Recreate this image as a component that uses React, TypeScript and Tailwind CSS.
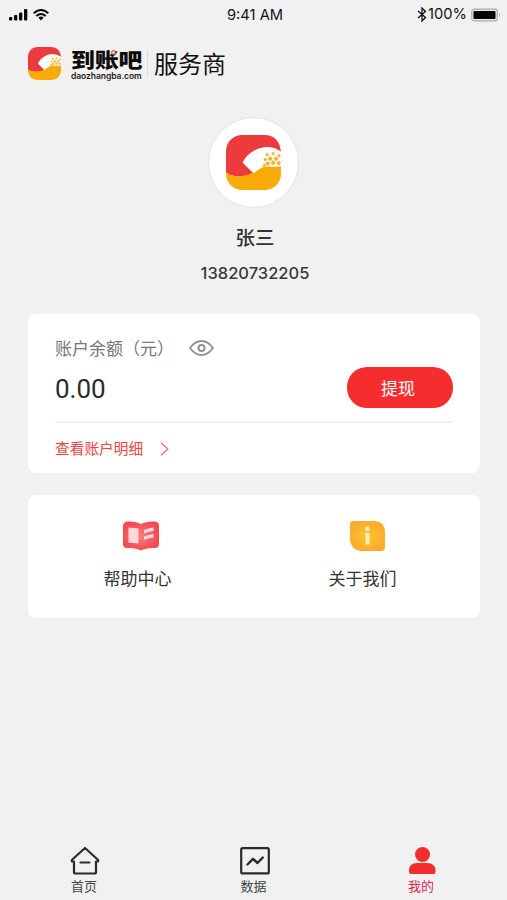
import React from "react";

const CJK = "font-['Noto_Sans_CJK_SC',sans-serif]";
const LATIN = "font-['Inter','Noto_Sans_CJK_SC',sans-serif]";

function Logo({ className }: { className: string }) {
  return (
    <svg viewBox="0 0 56 56" className={className}>
      <path d="M17 0H39C49 0 55 6 56 17Q50 12.500 42 12.500C30 12.500 21 20 17 28L28 39Q20 43 12 42Q5 42 0 38V17C0 7 7 0 17 0Z" fill="#ed3a3c" />
      <path d="M0 38Q5 42 12 42Q21 42 28 38C34 33 40 31 47 32H56V39C56 49 49 56 39 56H17C7 56 0 49 0 39Z" fill="#fbab07" />
      <path d="M17 28C21 20 30 12.500 42 12.500Q50 12.500 56 17V30L51 32H39Q34 34 28 39Z" fill="#fff" />
      <g fill="#fbb32e">
        <path d="M48 17l2 2-2 2-2-2zM42 18l2 2-2 2-2-2zM54 19l2 2-2 2-2-2zM45 21.500l2.600 2.600L45 26.700l-2.600-2.600zM51 21.500l2.600 2.600L51 26.700l-2.600-2.600zM40 23l2 2-2 2-2-2zM48 25.500l2.800 2.800L48 31.100l-2.800-2.800zM54 26l2 2.600-2 2.600-2.600-2.600zM42.500 26.500l2.600 2.600-2.600 2.600-2.600-2.600zM39 29l2 2-2 2-2-2z" />
      </g>
    </svg>
  );
}

function StatusBar() {
  return (
    <div className={`${LATIN} flex h-[30px] items-center text-[14.700px] leading-none text-[#111]`}>
      <div className="flex w-[227px] items-center gap-[5px] pl-[9px]">
        <svg className="h-[12px] w-[19px]" viewBox="0 0 19 12" fill="#080808">
          <rect x="0" y="8" width="3.300" height="3.500" rx="1" />
          <rect x="5" y="6" width="3.300" height="5.500" rx="1" />
          <rect x="10" y="3.500" width="3.300" height="8" rx="1" />
          <rect x="15" y="0" width="3.300" height="11.500" rx="1" />
        </svg>
        <svg className="h-[12px] w-[16px]" viewBox="0 0 16 12" fill="none" stroke="#080808" strokeWidth="2">
          <path d="M.7 4.200Q8-2.200 15.300 4.200M3.300 7Q8 3 12.700 7" />
          <path d="M5.300 8.600Q8 6.500 10.700 8.600L8 11.500Z" fill="#080808" stroke="none" />
        </svg>
      </div>
      <span>9:41 AM</span>
      <div className="ml-auto flex items-center pr-[5px]">
        <svg className="-mt-[1px] h-[15px] w-[10px]" viewBox="0 0 10 15" fill="none" stroke="#111" strokeWidth="1.300">
          <path d="M1 4L8.500 10.500L5 14V1L8.500 4.500L1 11" />
        </svg>
        <span className="ml-[1px] -mt-[1px]">100%</span>
        <svg className="ml-[4px] h-[14px] w-[31px]" viewBox="0 0 31 14">
          <rect x=".8" y="1.200" width="25.500" height="11.600" rx="2.500" fill="#ededed" stroke="#aaa" strokeWidth="1.200" />
          <rect x="2.500" y="3" width="22" height="8" rx="1" fill="#050505" />
          <path d="M28 5Q30 7 28 9Z" fill="#aaa" />
        </svg>
      </div>
    </div>
  );
}

function Header() {
  return (
    <header className="mt-[16px] flex h-[34px] items-center pl-[28px]">
      <Logo className="h-[33px] w-[33px]" />
      <div className="ml-[10px] w-[71px] pt-[4px]">
        <div className="relative h-[22px]">
          <span className={`${CJK} block origin-top scale-y-[0.86] whitespace-nowrap text-[24px] font-black leading-[24px] tracking-[-0.2px] text-[#0b0b0b]`}>到账吧</span>
          <span className="absolute left-[40px] top-[1px] h-[5px] w-[5px] rounded-full border-[1.500px] border-[#ed3a3c] bg-[#f8c8c8]" />
        </div>
        <div className="whitespace-nowrap font-['Inter',sans-serif] text-[8.500px] font-semibold leading-[10px] tracking-[-0.05px] text-[#222]">daozhangba.com</div>
      </div>
      <div className="ml-[5px] h-[27px] w-px bg-[#dcdcdc]" />
      <span className={`${CJK} ml-[6px] text-[24px] leading-[34px] text-[#111]`}>服务商</span>
    </header>
  );
}

function Profile() {
  return (
    <section className="mt-[36.500px] flex flex-col items-center">
      <div className="flex h-[91px] w-[91px] items-center justify-center rounded-full border border-[#e3e3e3] bg-white">
        <Logo className="h-[55px] w-[55px]" />
      </div>
      <div className={`${CJK} ml-[3px] mt-[15px] h-[28px] text-[19.500px] font-medium leading-[28px] text-[#333]`}>张三</div>
      <div className={`${LATIN} ml-[3px] mt-[12px] h-[20px] text-[16.500px] font-medium leading-[20px] text-[#383838]`}>13820732205</div>
    </section>
  );
}

function Balance() {
  return (
    <section className={`${CJK} ml-[28px] mr-[27px] mt-[31px] h-[159px] rounded-[8px] bg-white pl-[27px] pr-[28px] pt-[22.500px]`}>
      <div className="flex h-[24px] items-center text-[17px] text-[#777]">
        <span className="w-[134px] whitespace-nowrap">账户余额（元）</span>
        <svg className="h-[16px] w-[25px]" viewBox="0 0 25 16" fill="none" stroke="#929292" strokeWidth="1.800">
          <path d="M1 8Q6 1 12.500 1T24 8Q19 15 12.500 15T1 8Z" />
          <circle cx="12.500" cy="8" r="3" strokeWidth="2" />
        </svg>
      </div>
      <div className="mt-[7px] flex h-[41px] items-center justify-between">
        <span className="pt-[4px] font-['Roboto',sans-serif] text-[26px] text-[#2c2c2c]">0.00</span>
        <button className="-mr-[1px] flex h-[41px] w-[106px] items-center justify-center rounded-[20px] bg-[#f52d2e] pr-[4px] text-[17px] text-white">提现</button>
      </div>
      <div className="mt-[12.500px] h-[2px] bg-[#f0f0f0]" />
      <div className="mt-[15px] flex h-[22px] items-center text-[14.700px] leading-none text-[#ee4444]">
        <span>查看账户明细</span>
        <svg className="ml-[17px] h-[14px] w-[9px]" viewBox="0 0 9 14" fill="none" stroke="#f06c72" strokeWidth="1.200">
          <path d="M1 .7L7.800 7L1 13.300" />
        </svg>
      </div>
    </section>
  );
}

function Shortcuts() {
  return (
    <section className={`${CJK} ml-[28px] mr-[27px] mt-[22.500px] flex h-[123px] rounded-[8px] bg-white pt-[26px] text-[17px] text-[#333]`}>
      <div className="flex w-[219px] flex-col items-center">
        <svg className="ml-[7px] h-[30px] w-[36px]" viewBox="0 0 36 30">
          <defs>
            <radialGradient id="book"><stop stopColor="#f77c80" /><stop offset="1" stopColor="#f44b51" /></radialGradient>
          </defs>
          <path d="M4 .5Q13 0 18 3Q23 0 32 .5Q36 1 36 5V23Q36 27 32 27Q23 26.500 18 29.500Q13 26.500 4 27Q0 27 0 23V5Q0 1 4 .5Z" fill="url(#book)" />
          <path d="M5.500 6.500L15.500 7.500V22.500L5.500 21.500Z" fill="#ffd9d9" />
          <path d="M21 9Q25 7 30.500 6.500V10Q25 10.500 21 12.500ZM21 15.500Q25 13.500 30.500 13V16.500Q25 17 21 19Z" fill="#ffd9d9" />
        </svg>
        <span className="mt-[14px] leading-[25px]">帮助中心</span>
      </div>
      <div className="flex w-[231px] flex-col items-center">
        <svg className="ml-[9px] h-[30px] w-[35px]" viewBox="0 0 35 30">
          <defs>
            <radialGradient id="info"><stop stopColor="#ffc52b" /><stop offset="1" stopColor="#fbad2b" /></radialGradient>
          </defs>
          <path d="M3 0H25Q35 1 35 11V26Q35 30 31 30H11Q1 29 0 19V3Q0 0 3 0Z" fill="url(#info)" />
          <circle cx="17.500" cy="7.800" r="2.200" fill="#fff0bf" />
          <path d="M15 12H19.500V23.500H15.500V14.500H15Z" fill="#fff0bf" />
        </svg>
        <span className="mt-[14px] leading-[25px]">关于我们</span>
      </div>
    </section>
  );
}

function TabBar() {
  return (
    <nav className={`${CJK} mt-auto flex h-[54px] text-[13px] text-[#444]`}>
      <div className="flex w-[168px] flex-col items-center">
        <svg className="ml-[2px] h-[29px] w-[30px]" viewBox="0 0 30 29" fill="none" stroke="#2b2b2b" strokeWidth="2.200" strokeLinejoin="round" strokeLinecap="round">
          <path d="M4 15.500H2L1.800 14L15 2L28.200 14L28 15.500H26V26Q26 27.500 24.500 27.500H5.500Q4 27.500 4 26ZM10.500 16.500H19.500" />
        </svg>
        <span className="mt-[2px] leading-[18px]">首页</span>
      </div>
      <div className="flex w-[171px] flex-col items-center">
        <svg className="ml-[2px] h-[29px] w-[30px]" viewBox="0 0 30 29" fill="none" stroke="#2b2b2b" strokeWidth="2.200" strokeLinejoin="round" strokeLinecap="round">
          <rect x="1.200" y="2.200" width="27.600" height="25.200" rx="1.500" />
          <path d="M7.500 18.500L13 12.800L17.500 17L22.800 11.500" strokeWidth="2.400" />
        </svg>
        <span className="mt-[2px] leading-[18px]">数据</span>
      </div>
      <div className="flex w-[164px] flex-col items-center text-[#dc2856]">
        <svg className="ml-[2px] h-[29px] w-[28px]" viewBox="0 0 28 29" fill="#f52d2e">
          <circle cx="14.500" cy="8.500" r="7.500" />
          <path d="M9 17H19Q27.500 17 27.500 25V26Q27.500 28 25.500 28H3Q1 28 1 26V25Q1 17 9 17Z" />
        </svg>
        <span className="mt-[2px] leading-[18px]">我的</span>
      </div>
    </nav>
  );
}

export default function App() {
  return (
    <main className="flex h-[900px] w-[507px] flex-col overflow-hidden bg-[#f1f1f1]">
      <StatusBar />
      <Header />
      <Profile />
      <Balance />
      <Shortcuts />
      <TabBar />
    </main>
  );
}
